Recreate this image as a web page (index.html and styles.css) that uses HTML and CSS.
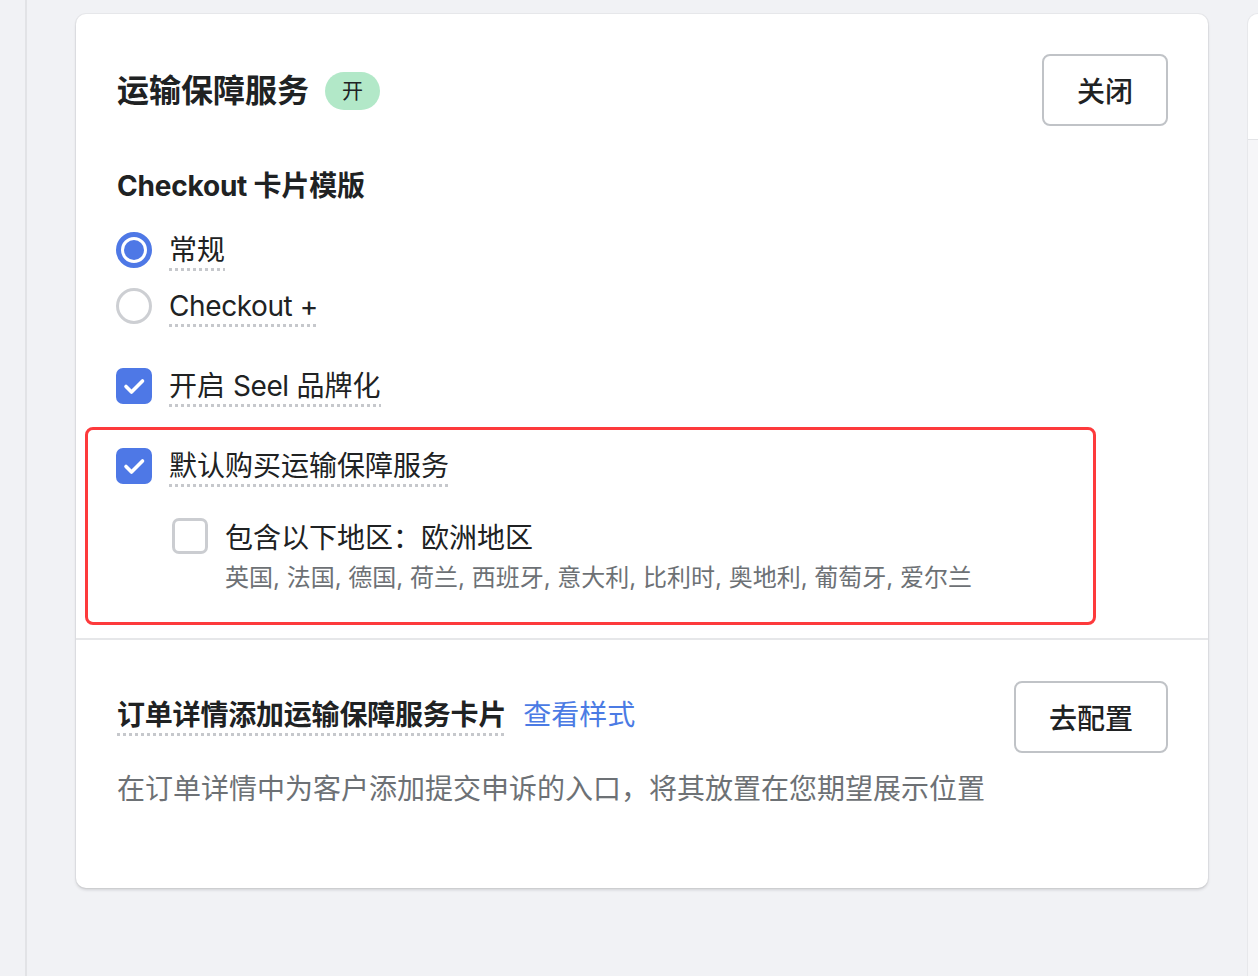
FILE: index.html
```html
<!DOCTYPE html>
<html lang="zh-CN">
<head>
<meta charset="utf-8">
<title>运输保障服务</title>
<link rel="stylesheet" href="styles.css">
</head>
<body>
<div class="page">
  <div class="rail"></div>
  <main class="main">
    <section class="card">
      <div class="card-section first">
        <div class="header">
          <div class="title-wrap">
            <h2 class="title">运输保障服务</h2>
            <span class="badge">开</span>
          </div>
          <button class="btn">关闭</button>
        </div>

        <h3 class="subheading">Checkout 卡片模版</h3>

        <div class="choices">
          <label class="choice">
            <span class="radio checked"></span>
            <span class="label-text">常规</span>
          </label>
          <label class="choice">
            <span class="radio"></span>
            <span class="label-text latin">Checkout +</span>
          </label>
        </div>

        <label class="choice brand">
          <span class="checkbox checked">
            <svg viewBox="0 0 36 36" width="36" height="36"><path d="M10 18.5 L15.5 24 L26.5 13" fill="none" stroke="#fff" stroke-width="3.6" stroke-linecap="round" stroke-linejoin="round"/></svg>
          </span>
          <span class="label-text">开启 <span class="tight">Seel</span> 品牌化</span>
        </label>

        <div class="highlight">
          <label class="choice">
            <span class="checkbox checked">
              <svg viewBox="0 0 36 36" width="36" height="36"><path d="M10 18.5 L15.5 24 L26.5 13" fill="none" stroke="#fff" stroke-width="3.6" stroke-linecap="round" stroke-linejoin="round"/></svg>
            </span>
            <span class="label-text">默认购买运输保障服务</span>
          </label>
          <div class="sub-choice">
            <span class="checkbox"></span>
            <div class="sub-body">
              <div class="sub-label">包含以下地区：欧洲地区</div>
              <div class="help">英国, 法国, 德国, 荷兰, 西班牙, 意大利, 比利时, 奥地利, 葡萄牙, 爱尔兰</div>
            </div>
          </div>
        </div>
      </div>

      <div class="card-section second">
        <div class="header">
          <div class="title-wrap">
            <span class="label-text strong">订单详情添加运输保障服务卡片</span>
            <a class="link" href="#">查看样式</a>
          </div>
          <button class="btn">去配置</button>
        </div>
        <p class="desc">在订单详情中为客户添加提交申诉的入口，将其放置在您期望展示位置</p>
      </div>
    </section>
  </main>
  <aside class="side">
    <div class="side-top"></div>
  </aside>
</div>
</body>
</html>
```

FILE: styles.css
```css
* { box-sizing: border-box; }

html, body {
  margin: 0;
  padding: 0;
}

body {
  background: #f1f2f5;
  font-family: Inter, "Noto Sans CJK SC", sans-serif;
  color: #202223;
  width: 1258px;
  height: 976px;
  overflow: hidden;
}

.page {
  display: flex;
  height: 976px;
}

.rail {
  width: 27px;
  flex: none;
  border-right: 2px solid #e2e3e6;
}

.main {
  flex: none;
  padding: 14px 0 0 49px;
}

.card {
  width: 1132px;
  background: #fff;
  border-radius: 10px;
  box-shadow: 0 0 0 1px rgba(63, 63, 68, 0.05), 0 2px 3px rgba(63, 63, 68, 0.18);
}

.card-section.first {
  padding: 41px 40px 13px 41px;
}

.card-section.second {
  border-top: 2px solid #e6e7e9;
  padding: 40px 40px 79px 41px;
}

.header {
  display: flex;
  align-items: center;
  justify-content: space-between;
  height: 72px;
}

.card-section.first .header .btn {
  margin-top: -2px;
}

.card-section.second .header .btn {
  margin-top: 1px;
}

.title-wrap {
  display: flex;
  align-items: center;
}

.title {
  margin: 0;
  font-size: 32px;
  line-height: 40px;
  font-weight: 700;
  color: #202223;
}

.badge {
  margin-left: 16px;
  height: 38px;
  padding: 0 17px;
  border-radius: 19px;
  background: #b2e8c8;
  font-size: 21px;
  line-height: 38px;
  color: #202223;
}

.btn {
  height: 72px;
  padding: 0 33px;
  background: #fff;
  border: 2px solid #c0c3c7;
  border-radius: 8px;
  font-family: Inter, "Noto Sans CJK SC", sans-serif;
  font-size: 28px;
  font-weight: 500;
  color: #202223;
  cursor: pointer;
}

.subheading {
  margin: 39px 0 0;
  font-size: 28px;
  line-height: 40px;
  font-weight: 700;
  letter-spacing: -0.2px;
}

.choices {
  margin-top: 26px;
  display: flex;
  flex-direction: column;
  gap: 17px;
}

.choice {
  display: flex;
  align-items: flex-start;
  gap: 17px;
  margin-left: -1px;
}

.choice.brand {
  margin-top: 41px;
}

.label-text {
  font-size: 28px;
  line-height: 35px;
  padding-top: 1px;
  padding-bottom: 3px;
  background-image: linear-gradient(to right, #c6c8cc 0 3px, transparent 3px 6px);
  background-size: 6px 3px;
  background-repeat: repeat-x;
  background-position: 0 100%;
  color: #202223;
}

.label-text.latin,
.tight {
  letter-spacing: -0.4px;
}

.label-text.strong {
  font-weight: 700;
  letter-spacing: -0.2px;
}

.radio {
  flex: none;
  width: 36px;
  height: 36px;
  border-radius: 50%;
  border: 3px solid #cdcfd3;
  background: #fff;
  position: relative;
}

.radio.checked {
  border: 5px solid #4e78e6;
}

.radio.checked::after {
  content: "";
  position: absolute;
  left: 3px;
  top: 3px;
  width: 20px;
  height: 20px;
  border-radius: 50%;
  background: #4e78e6;
}

.checkbox {
  flex: none;
  width: 36px;
  height: 36px;
  border-radius: 7px;
  border: 3px solid #cbcdd1;
  background: #fff;
}

.checkbox.checked {
  border: none;
  background: #4e78e6;
}

.checkbox svg {
  display: block;
}

.highlight {
  margin: 20px 0 0 -32px;
  width: 1011px;
  border: 3px solid #fd3a3c;
  border-radius: 8px;
  padding: 18px 0 28px 29px;
}

.sub-choice {
  margin: 31px 0 0 55px;
  display: flex;
  align-items: flex-start;
  gap: 17px;
}

.sub-label {
  font-size: 28px;
  line-height: 36px;
  padding-top: 2px;
}

.help {
  margin-top: 6px;
  font-size: 24px;
  line-height: 32px;
  color: #6d7175;
}

.link {
  margin-left: 17px;
  font-size: 28px;
  line-height: 36px;
  color: #4b7be4;
  text-decoration: none;
  padding-bottom: 3px;
}

.desc {
  margin: 17px 0 0;
  font-size: 28px;
  line-height: 40px;
  color: #6d7175;
}

.side {
  flex: 1;
  margin: 14px 0 0 40px;
  border-radius: 10px 0 0 0;
  background: #f6f6f8;
  box-shadow: 0 0 0 1px rgba(63, 63, 68, 0.05);
}

.side-top {
  height: 126px;
  background: #fff;
  border-radius: 10px 0 0 0;
  border-bottom: 1px solid #e3e4e7;
}
```
